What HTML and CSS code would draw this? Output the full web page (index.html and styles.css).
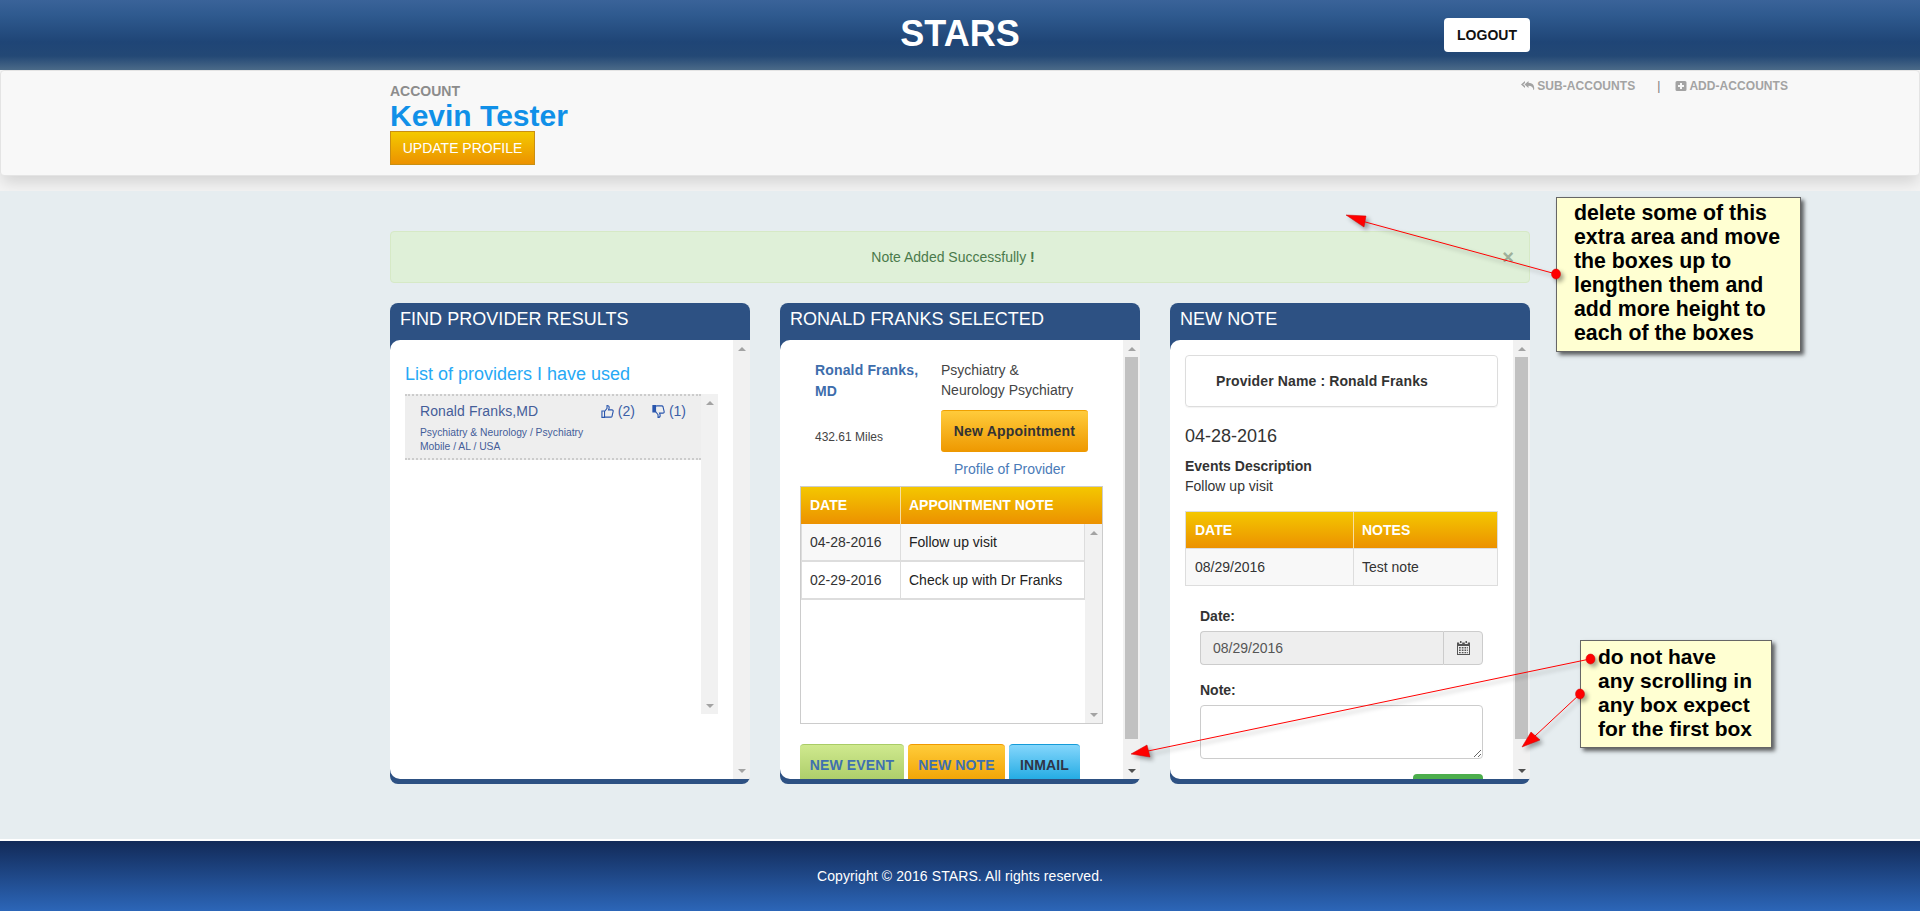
FILE: index.html
```html
<!DOCTYPE html>
<html lang="en">
<head>
<meta charset="utf-8">
<title>STARS</title>
<link rel="stylesheet" href="styles.css">
</head>
<body>
<div class="page">
  <header class="topbar">
    <div class="container topbar-inner">
      <span></span>
      <h1 class="brand">STARS</h1>
      <a class="logout" href="#">LOGOUT</a>
    </div>
  </header>

  <section class="account-band">
    <div class="account-panel">
      <div class="account-info">
        <div class="account-label">ACCOUNT</div>
        <div class="account-name">Kevin Tester</div>
        <a class="update-btn" href="#">UPDATE PROFILE</a>
      </div>
      <nav class="account-links">
        <a href="#"><svg class="link-icon" viewBox="0 0 14 12"><path d="M4 1 0 4.500 4 8V6L2.200 4.500 4 3zM7.500 1 3.500 4.500 7.500 8V5.800c2.800 0 4.500 1 5 4.200h.5c.8-4-.8-7-5.500-7.200z"/></svg>SUB-ACCOUNTS</a>
        <span class="link-sep">|</span>
        <a href="#"><svg class="link-icon plus" viewBox="0 0 12 12"><path fill-rule="evenodd" d="M2 1h8a1.500 1.500 0 0 1 1.500 1.500v7A1.500 1.500 0 0 1 10 11H2A1.500 1.500 0 0 1 .5 9.500v-7A1.500 1.500 0 0 1 2 1zm3 2v2H3v2h2v2h2V7h2V5H7V3z"/></svg>ADD-ACCOUNTS</a>
      </nav>
    </div>
  </section>

  <main class="main">
    <div class="container">
      <div class="alert">
        <span>Note Added Successfully <b>!</b></span>
        <span class="alert-close">×</span>
      </div>

      <div class="columns">
        <article class="panel">
          <h2 class="panel-head">FIND PROVIDER RESULTS</h2>
          <div class="panel-body">
            <div class="panel-content pad-list">
              <h3 class="list-title">List of providers I have used</h3>
              <div class="provider-list">
                <div class="provider-rows">
                  <div class="provider-item">
                    <div class="provider-top">
                      <span class="provider-name">Ronald Franks,MD</span>
                      <span class="vote">
                        <svg class="thumb" viewBox="0 0 14 16"><path d="M1 7.500h2.800v6.800H1zM3.800 8 6.500 4.500V1.500c1.500 0 2.300.9 2.300 2.200 0 1-.5 2-.7 2.600h3.700c1 0 1.500.8 1.300 1.600l-1.200 5.200c-.2.700-.7 1-1.400 1H5.500c-.7 0-1-.4-1.700-.6"/></svg>
                        (2)
                      </span>
                      <span class="vote">
                        <svg class="thumb" viewBox="0 0 14 16"><path class="cuff" d="M1 1.700h2.800v6.800H1z"/><path d="M3.800 8 6.500 11.500v3c1.500 0 2.300-.9 2.300-2.200 0-1-.5-2-.7-2.600h3.700c1 0 1.500-.8 1.300-1.600l-1.200-5.200c-.2-.7-.7-1-1.400-1H5.500c-.7 0-1 .4-1.700.6"/></svg>
                        (1)
                      </span>
                    </div>
                    <div class="provider-sub">Psychiatry &amp; Neurology / Psychiatry<br>Mobile / AL / USA</div>
                  </div>
                </div>
                <div class="sb"><span class="sb-btn"><i class="up"></i></span><span class="sb-track"></span><span class="sb-btn"><i class="down"></i></span></div>
              </div>
            </div>
            <div class="sb"><span class="sb-btn"><i class="up"></i></span><span class="sb-track"></span><span class="sb-btn"><i class="down"></i></span></div>
          </div>
        </article>

        <article class="panel">
          <h2 class="panel-head">RONALD FRANKS SELECTED</h2>
          <div class="panel-body">
            <div class="panel-content">
              <div class="selected-top">
                <div class="selected-left">
                  <a class="selected-name" href="#">Ronald Franks, MD</a>
                  <div class="miles">432.61 Miles</div>
                </div>
                <div class="selected-right">
                  <div class="specialty">Psychiatry &amp;<br>Neurology Psychiatry</div>
                  <a class="appt-btn" href="#">New Appointment</a>
                  <a class="profile-link" href="#">Profile of Provider</a>
                </div>
              </div>
              <div class="appt-box">
                <div class="grid-row grid-head appt-cols"><span>DATE</span><span>APPOINTMENT NOTE</span></div>
                <div class="appt-scroll">
                  <div class="appt-rows">
                    <div class="grid-row appt-cols odd"><span>04-28-2016</span><span class="dark">Follow up visit</span></div>
                    <div class="grid-row appt-cols"><span>02-29-2016</span><span class="dark">Check up with Dr Franks</span></div>
                  </div>
                  <div class="sb"><span class="sb-btn"><i class="up"></i></span><span class="sb-track"></span><span class="sb-btn"><i class="down"></i></span></div>
                </div>
              </div>
              <div class="action-row">
                <a class="action green" href="#">NEW EVENT</a>
                <a class="action orange" href="#">NEW NOTE</a>
                <a class="action blue" href="#">INMAIL</a>
              </div>
            </div>
            <div class="sb"><span class="sb-btn"><i class="up"></i></span><span class="sb-track"><b class="sb-thumb"></b></span><span class="sb-btn"><i class="down dark"></i></span></div>
          </div>
        </article>

        <article class="panel">
          <h2 class="panel-head">NEW NOTE</h2>
          <div class="panel-body">
            <div class="panel-content pad-note">
              <div class="provider-box">Provider Name : Ronald Franks</div>
              <div class="note-date">04-28-2016</div>
              <div class="event-title">Events Description</div>
              <div class="event-text">Follow up visit</div>
              <div class="note-table">
                <div class="grid-row grid-head note-cols"><span>DATE</span><span>NOTES</span></div>
                <div class="grid-row note-cols odd"><span>08/29/2016</span><span>Test note</span></div>
              </div>
              <form class="note-form">
                <label class="form-label">Date:</label>
                <div class="date-group">
                  <input class="date-input" type="text" value="08/29/2016" readonly>
                  <span class="date-addon"><svg class="cal" viewBox="0 0 13 14"><path fill-rule="evenodd" d="M3 0h1.500v2H3zM8.500 0H10v2H8.500zM0 1.500h2.200V3h3V1.500h2.600V3h3V1.500H13V14H0zM1 5v8h11V5zM2 6h1.700v1.500H2zm2.800 0h1.700v1.500H4.800zm2.700 0h1.700v1.500H7.500zm2.700 0h.8v1.500h-.8zM2 8.500h1.700V10H2zm2.800 0h1.700V10H4.800zm2.700 0h1.700V10H7.500zm2.700 0h.8V10h-.8zM2 11h1.700v1.200H2zm2.800 0h1.700v1.200H4.800zm2.700 0h1.700v1.200H7.500zm2.700 0h.8v1.200h-.8z"/></svg></span>
                </div>
                <label class="form-label note-label">Note:</label>
                <textarea class="note-input"></textarea>
                <button class="save-btn" type="button" aria-label="Save"></button>
              </form>
            </div>
            <div class="sb"><span class="sb-btn"><i class="up"></i></span><span class="sb-track"><b class="sb-thumb"></b></span><span class="sb-btn"><i class="down dark"></i></span></div>
          </div>
        </article>
      </div>
    </div>
  </main>

  <footer class="footer">Copyright © 2016 STARS. All rights reserved.</footer>

  <aside class="callout callout-one">delete some of this<br>extra area and move<br>the boxes up to<br>lengthen them and<br>add more height to<br>each of the boxes</aside>
  <aside class="callout callout-two">do not have<br>any scrolling in<br>any box expect<br>for the first box</aside>

  <svg class="arrows" viewBox="0 0 1920 911" width="1920" height="911">
    <g class="arrow-set">
      <line x1="1556" y1="274" x2="1358" y2="220"/>
      <polygon points="1346,215 1366,216 1364,227"/>
      <line x1="1590" y1="659" x2="1148" y2="751"/>
      <polygon points="1131,754 1147,745 1150,757"/>
      <line x1="1580" y1="694" x2="1535" y2="736"/>
      <polygon points="1522,747 1531,732 1540,740"/>
      <ellipse cx="1556" cy="274" rx="4.500" ry="5"/>
      <ellipse cx="1590.500" cy="659" rx="4.500" ry="5"/>
      <ellipse cx="1580" cy="694" rx="4.500" ry="5"/>
    </g>
  </svg>
</div>
</body>
</html>
```
FILE: styles.css
```css
* { box-sizing: border-box; }
html, body { margin: 0; padding: 0; }
body {
  font-family: "Liberation Sans", Arial, sans-serif;
  font-size: 14px;
  line-height: 20px;
  color: #333;
  background: #e6edf0;
  overflow: hidden;
}
a { text-decoration: none; }
h1, h2, h3 { margin: 0; font-weight: normal; }

.page {
  position: relative;
  display: flex;
  flex-direction: column;
  height: 911px;
}
.container { width: 1140px; margin: 0 auto; }

/* top bar */
.topbar {
  height: 70px;
  flex: none;
  background: linear-gradient(to bottom, #3a6399 0, #2f5a8f 15px, #1f4576 42px, #234875 56px, #4b6a88 70px);
}
.topbar-inner {
  display: grid;
  grid-template-columns: 1fr auto 1fr;
  align-items: start;
}
.brand {
  font-size: 36px;
  line-height: 40px;
  font-weight: bold;
  color: #fff;
  margin-top: 14px;
}
.logout {
  justify-self: end;
  width: 86px;
  height: 34px;
  margin-top: 18px;
  background: #fff;
  border-radius: 4px;
  color: #111;
  font-size: 14px;
  font-weight: bold;
  line-height: 34px;
  text-align: center;
}

/* account */
.account-band {
  flex: none;
  height: 121px;
  background: #f4f4f4;
  overflow: hidden;
}
.account-panel {
  display: flex;
  justify-content: space-between;
  height: 106px;
  padding: 5px 131px 0 389px;
  background: #f8f8f8;
  border: 1px solid #e4e4e4;
  border-radius: 4px;
  box-shadow: 0 8px 16px -2px rgba(0, 0, 0, .14);
}
.account-info { padding-top: 7px; }
.account-label {
  font-size: 14px;
  line-height: 16px;
  font-weight: bold;
  color: #8c8c8c;
}
.account-name {
  font-size: 30px;
  line-height: 32px;
  padding-top: 1px;
  height: 32px;
  font-weight: bold;
  color: #1090e8;
}
.update-btn {
  display: block;
  width: 145px;
  height: 34px;
  border: 1px solid #c98f12;
  background: linear-gradient(to bottom, #f4c900, #ec9200);
  color: #fff;
  font-size: 14px;
  line-height: 32px;
  text-align: center;
}
.account-links {
  display: flex;
  align-items: flex-start;
  font-size: 12px;
  line-height: 16px;
  font-weight: bold;
  letter-spacing: .05px;
  padding-top: 2px;
}
.account-links a { color: #a3a3a3; display: flex; align-items: center; }
.link-icon { width: 14px; height: 12px; fill: #a3a3a3; margin-right: 2px; }
.link-icon.plus { width: 12px; margin-right: 2px; }
.link-sep { color: #777; margin: 0 15px 0 22px; font-weight: normal; }

/* main */
.main { flex: 1; padding-top: 40px; }
.alert {
  position: relative;
  height: 52px;
  margin-bottom: 20px;
  background: #dff0d8;
  border: 1px solid #d6e9c6;
  border-radius: 4px;
  color: #4a7a4b;
  font-size: 14px;
  line-height: 50px;
  text-align: center;
  padding-right: 14px;
}
.alert-close {
  position: absolute;
  right: 15px;
  top: 0;
  font-size: 20px;
  font-weight: bold;
  color: #9fb09a;
}
.columns {
  display: grid;
  grid-template-columns: repeat(3, 360px);
  column-gap: 30px;
}

/* panels */
.panel {
  height: 481px;
  padding-bottom: 5px;
  background: #2d5183;
  border-radius: 8px;
  overflow: hidden;
  display: flex;
  flex-direction: column;
}
.panel-head {
  flex: none;
  height: 37px;
  padding-left: 10px;
  font-size: 18px;
  line-height: 33px;
  letter-spacing: .04px;
  color: #fff;
}
.panel-body {
  flex: 1;
  min-height: 0;
  display: flex;
  background: #fff;
  border-radius: 10px 0 0 10px;
  overflow: hidden;
}
.panel-content {
  flex: 1;
  min-width: 0;
  overflow: hidden;
}

/* fake scrollbars */
.sb {
  flex: none;
  width: 17px;
  background: #f1f1f1;
  display: flex;
  flex-direction: column;
}
.sb-btn {
  flex: none;
  height: 17px;
  display: flex;
  align-items: center;
  justify-content: center;
}
.sb-btn i { display: block; width: 0; height: 0; border-left: 4px solid transparent; border-right: 4px solid transparent; }
.sb-btn i.up { border-bottom: 4px solid #a3a3a3; }
.sb-btn i.down { border-top: 4px solid #a3a3a3; }
.sb-btn i.down.dark { border-top-color: #505050; }
.sb-track { flex: 1; }
.sb-thumb { display: block; height: 382px; margin: 0 2px; background: #c1c1c1; }

/* provider list */
.pad-list { padding: 24px 15px 0; }
.list-title {
  font-size: 18px;
  line-height: 20px;
  color: #27a9f5;
  margin-bottom: 10px;
}
.provider-list { display: flex; height: 320px; }
.provider-rows { flex: 1; min-width: 0; }
.provider-item {
  background: #eee;
  height: 66px;
  padding: 5px 15px 4px 15px;
  border-top: 2px dotted #ccc;
  border-bottom: 2px dotted #ccc;
  color: #445d99;
}
.provider-top { display: flex; align-items: center; gap: 17px; }
.provider-name { flex: 1; letter-spacing: .1px; }
.vote { display: inline-flex; align-items: center; gap: 4px; color: #3b5ea6; }
.thumb { width: 13px; height: 15px; fill: none; stroke: #2a56ad; stroke-width: 1.200; }
.thumb .cuff { fill: #2a56ad; }
.provider-sub { font-size: 10.300px; line-height: 14px; margin-top: 5px; }

/* selected */
.selected-top { display: flex; padding: 20px 0 0 35px; }
.selected-left { width: 126px; }
.selected-name { display: block; width: 110px; font-weight: bold; line-height: 21px; letter-spacing: .15px; color: #3d6dac; }
.miles { margin-top: 25px; font-size: 12px; color: #444; }
.selected-right { width: 147px; }
.specialty { color: #444; }
.appt-btn {
  display: block;
  height: 42px;
  margin-top: 10px;
  border-top: 1px solid #efa000;
  border-radius: 3px;
  background: linear-gradient(to bottom, #ffcb3b, #ee9800);
  color: #333;
  font-weight: bold;
  letter-spacing: .2px;
  line-height: 41px;
  text-align: center;
}
.profile-link { display: block; margin-top: 7px; padding-left: 13px; color: #4a7bb8; white-space: nowrap; }

.appt-box {
  margin: 7px 20px 0;
  height: 238px;
  border: 1px solid #ccc;
  display: flex;
  flex-direction: column;
}
.grid-row { display: grid; }
.appt-cols { grid-template-columns: 99px 1fr; }
.note-cols { grid-template-columns: 167px 1fr; }
.grid-head {
  height: 37px;
  background: linear-gradient(to bottom, #f4c700, #ec9100);
  color: #fff;
  font-weight: bold;
  line-height: 36px;
}
.grid-row span { padding-left: 9px; }
.grid-head span + span { border-left: 1px solid #f7dfa0; padding-left: 8px; }
.appt-scroll { flex: 1; display: flex; min-height: 0; }
.appt-rows { flex: 1; min-width: 0; }
.appt-rows .grid-row { height: 38px; line-height: 36px; border-bottom: 2px solid #ddd; }
.appt-rows .grid-row span + span { border-left: 1px solid #ddd; padding-left: 8px; }
.appt-rows .grid-row span:first-child { border-left: 1px solid #ddd; padding-left: 8px; }
.appt-rows .grid-row { border-right: 1px solid #ddd; }
.odd { background: #f8f8f8; }
.dark { color: #222; }

.action-row { display: flex; gap: 4px; margin: 20px 0 0 20px; }
.action {
  height: 40px;
  padding-top: 0;
  border-radius: 4px 4px 0 0;
  font-weight: bold;
  letter-spacing: .15px;
  line-height: 40px;
  text-align: center;
  color: #3f70b0;
}
.action.green { width: 104px; background: linear-gradient(to bottom, #cfe98e, #a9ca66); border-top: 1px solid #a9cc66; }
.action.orange { width: 97px; background: linear-gradient(to bottom, #ffcc3a, #f0a000); border-top: 1px solid #f09a00; }
.action.blue { width: 71px; background: linear-gradient(to bottom, #84d6fc, #17a6e0); border-top: 1px solid #149bd8; color: #2f3547; }

/* new note */
.pad-note { padding: 15px 15px 0; }
.provider-box {
  height: 52px;
  padding-left: 30px;
  border: 1px solid #ddd;
  border-radius: 4px;
  font-weight: bold;
  letter-spacing: .12px;
  line-height: 40px;
  padding-top: 5px;
  color: #333;
  box-shadow: 0 1px 1px rgba(0, 0, 0, .05);
}
.note-date { margin-top: 19px; font-size: 18px; }
.event-title { margin-top: 10px; font-weight: bold; }
.note-table { margin-top: 15px; border: 1px solid #ddd; }
.note-table .grid-head { height: 36px; }
.note-table .grid-row:last-child { height: 37px; line-height: 36px; border-top: 1px solid #ddd; }
.note-table .grid-row:last-child span + span { border-left: 1px solid #ddd; padding-left: 8px; }
.note-form { display: flex; flex-direction: column; padding: 20px 15px 0; }
.form-label { font-weight: bold; margin-bottom: 5px; }
.note-label { margin-top: 15px; }
.date-group { display: flex; height: 34px; }
.date-input {
  flex: 1;
  min-width: 0;
  padding: 0 12px;
  border: 1px solid #ccc;
  border-right: 0;
  border-radius: 4px 0 0 4px;
  background: #eee;
  color: #555;
  font: 14px "Liberation Sans", Arial, sans-serif;
}
.date-addon {
  width: 40px;
  flex: none;
  display: flex;
  align-items: center;
  justify-content: center;
  background: #eee;
  border: 1px solid #ccc;
  border-radius: 0 4px 4px 0;
}
.cal { width: 13px; height: 14px; fill: #555; }
.note-input {
  height: 54px;
  border: 1px solid #ccc;
  border-radius: 4px;
  background: #fff;
  display: block;
}
.save-btn {
  align-self: flex-end;
  flex: none;
  width: 70px;
  height: 34px;
  margin-top: 15px;
  border: 0;
  border-radius: 4px;
  background: #4cae4c;
}

/* footer */
.footer {
  flex: none;
  height: 72px;
  border-top: 2px solid #fff;
  background: linear-gradient(to bottom, #122a58, #2c66b8);
  color: #fff;
  font-size: 14px;
  letter-spacing: .1px;
  line-height: 70px;
  text-align: center;
}

/* annotation overlay */
.callout {
  position: absolute;
  border: 1px solid #666;
  background: #ffffd2;
  color: #000;
  font-size: 21.300px;
  line-height: 24px;
  font-weight: bold;
  padding: 3px 0 0 17px;
  box-shadow: 3px 3px 4px rgba(0, 0, 0, .6);
  white-space: nowrap;
}
.callout-one { left: 1556px; top: 197px; width: 245px; height: 155px; }
.callout-two { left: 1580px; top: 640px; width: 192px; height: 108px; padding-top: 4px; font-size: 21px; }
.arrows { position: absolute; left: 0; top: 0; pointer-events: none; }
.arrow-set { filter: drop-shadow(3px 3px 2px rgba(0, 0, 0, .35)); }
.arrow-set line { stroke: #f00; stroke-width: 1; }
.arrow-set polygon, .arrow-set ellipse { fill: #f00; stroke: #c00; stroke-width: .5; }
```
